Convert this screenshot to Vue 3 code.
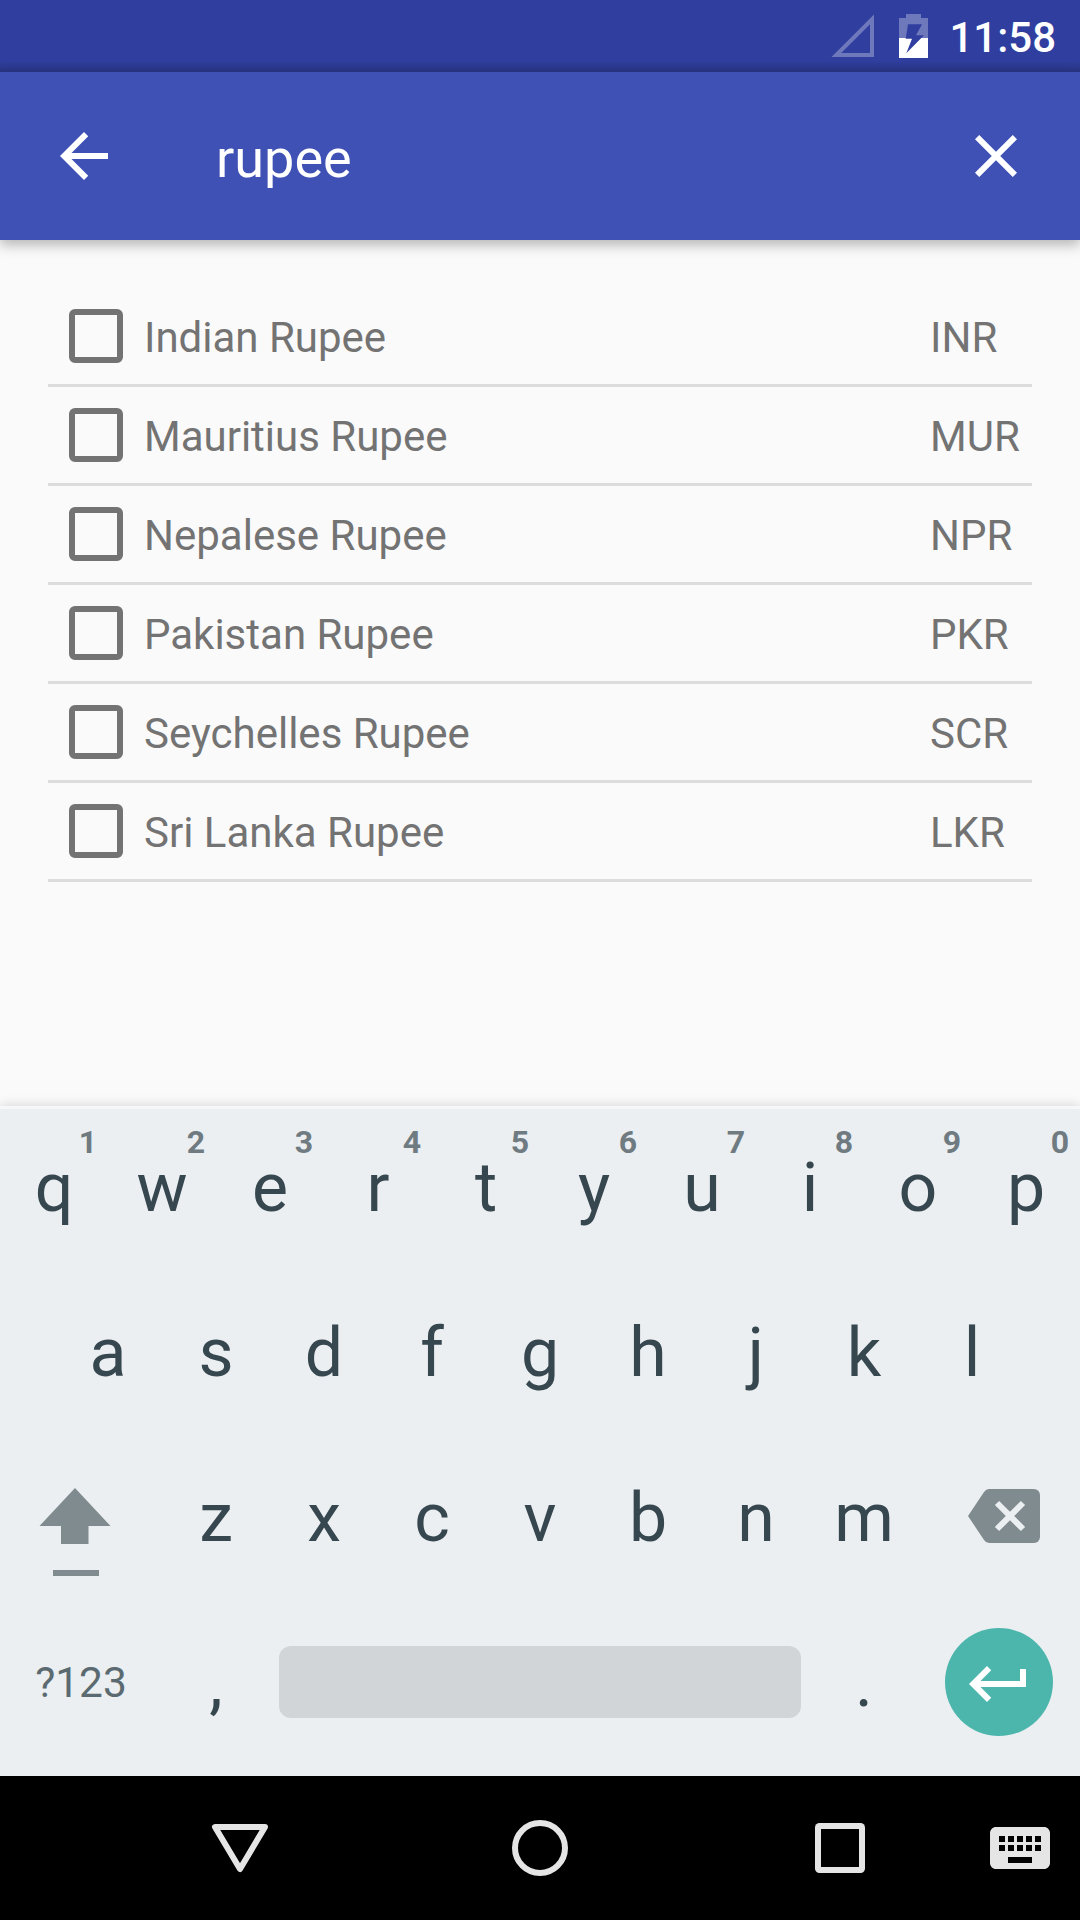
<script setup>
const currencies = [
  { name: 'Indian Rupee', code: 'INR' },
  { name: 'Mauritius Rupee', code: 'MUR' },
  { name: 'Nepalese Rupee', code: 'NPR' },
  { name: 'Pakistan Rupee', code: 'PKR' },
  { name: 'Seychelles Rupee', code: 'SCR' },
  { name: 'Sri Lanka Rupee', code: 'LKR' },
]
const topRow = [...'qwertyuiop'].map((letter, i) => ({ letter, hint: (i + 1) % 10 }))
const homeRow = [...'asdfghjkl']
const bottomRow = [...'zxcvbnm']
</script>

<template>
  <div class="screen">
    <header class="status">
      <svg class="signal" width="44" height="44" viewBox="0 0 44 44">
        <path fill="#fff" fill-opacity=".3" fill-rule="evenodd" d="M43 .5V43H.5zM39 10.2L10.2 39H39z" />
      </svg>
      <svg class="battery" width="29" height="44" viewBox="0 0 29 44">
        <defs>
          <linearGradient id="charge" gradientUnits="userSpaceOnUse" x1="0" y1="0" x2="0" y2="44">
            <stop offset="0" stop-color="#fff" stop-opacity=".3" />
            <stop offset=".5455" stop-color="#fff" stop-opacity=".3" />
            <stop offset=".5455" stop-color="#fff" />
            <stop offset="1" stop-color="#fff" />
          </linearGradient>
        </defs>
        <path fill="url(#charge)" fill-rule="evenodd" d="M0 4h7V0h15v4h7v40H0zM9 10.300L6.700 24.700H13L7.300 39.300 25 21.200H17L23 10.300z" />
      </svg>
      <span class="clock">11:58</span>
    </header>

    <div class="toolbar">
      <svg width="72" height="72" viewBox="0 0 24 24" fill="#fff">
        <path d="M20 11H7.830l5.590-5.590L12 4l-8 8 8 8 1.410-1.410L7.830 13H20v-2z" />
      </svg>
      <span class="query">rupee</span>
      <svg width="72" height="72" viewBox="0 0 24 24" fill="#fff">
        <path d="M19 6.410L17.590 5 12 10.590 6.410 5 5 6.410 10.590 12 5 17.590 6.410 19 12 13.410 17.590 19 19 17.590 13.410 12z" />
      </svg>
    </div>

    <main class="list">
      <div v-for="c in currencies" :key="c.code" class="row">
        <span class="box"></span>
        <span class="name">{{ c.name }}</span>
        <span class="code">{{ c.code }}</span>
      </div>
    </main>

    <section class="keyboard">
      <div class="keys">
        <span v-for="k in topRow" :key="k.letter" class="key">
          {{ k.letter }}<span class="hint">{{ k.hint }}</span>
        </span>
      </div>
      <div class="keys">
        <span v-for="k in homeRow" :key="k" class="key">{{ k }}</span>
      </div>
      <div class="keys">
        <span class="wide shift">
          <svg width="72" height="90" viewBox="0 0 72 90" fill="#808b8f">
            <path d="M36 0l35.500 38H49.500v18H22V38H.5z" />
            <path d="M14 82h46v6H14z" />
          </svg>
        </span>
        <span v-for="k in bottomRow" :key="k" class="key">{{ k }}</span>
        <span class="wide delete">
          <svg width="72" height="54" viewBox="0 0 72 54">
            <path fill="#808b8f" d="M21 0h45a6 6 0 0 1 6 6v42a6 6 0 0 1-6 6H21q-3 0-5-3L0 27 16 3q2-3 5-3z" />
            <path stroke="#ebeff2" stroke-width="6" d="M29 14l26 26M55 14L29 40" />
          </svg>
        </span>
      </div>
      <div class="keys">
        <span class="wide symbols">?123</span>
        <span class="key">,</span>
        <span class="space"></span>
        <span class="key">.</span>
        <span class="enter">
          <svg width="72" height="72" viewBox="0 0 24 24" fill="#fff">
            <path d="M19 7v4H5.830l3.580-3.590L8 6l-6 6 6 6 1.410-1.410L5.830 13H21V7z" />
          </svg>
        </span>
      </div>
    </section>

    <nav class="nav">
      <svg width="72" height="72" viewBox="0 0 72 72">
        <path d="M11 15h50L36 57z" fill="none" stroke="#e5e5e5" stroke-width="6" stroke-linejoin="round" />
      </svg>
      <svg width="72" height="72" viewBox="0 0 72 72">
        <circle cx="36" cy="36" r="25" fill="none" stroke="#e5e5e5" stroke-width="6" />
      </svg>
      <svg width="72" height="72" viewBox="0 0 72 72">
        <rect x="11" y="11" width="50" height="50" rx="4.500" fill="#e5e5e5" />
        <path d="M17 17h38v38H17z" fill="#000" />
      </svg>
      <svg class="ime" width="72" height="72" viewBox="0 0 24 24" fill="#e5e5e5">
        <path d="M20 5H4c-1.100 0-1.990.9-1.990 2L2 17c0 1.100.9 2 2 2h16c1.100 0 2-.9 2-2V7c0-1.100-.9-2-2-2zm-9 3h2v2h-2V8zm0 3h2v2h-2v-2zM8 8h2v2H8V8zm0 3h2v2H8v-2zm-1 2H5v-2h2v2zm0-3H5V8h2v2zm9 7H8v-2h8v2zm0-4h-2v-2h2v2zm0-3h-2V8h2v2zm3 3h-2v-2h2v2zm0-3h-2V8h2v2z" />
      </svg>
    </nav>
  </div>
</template>

<style>
body {
  margin: 0;
}
</style>

<style scoped>
.screen {
  width: 1080px;
  height: 1920px;
  display: flex;
  flex-direction: column;
  overflow: hidden;
  background: #fafafa;
  font-family: Roboto, sans-serif;
}
svg {
  display: block;
  flex: none;
}
.status {
  height: 72px;
  box-sizing: border-box;
  display: flex;
  align-items: flex-start;
  justify-content: flex-end;
  padding: 14px 24px 0 0;
  background: linear-gradient(#303f9f 60px, #2d3a92 66px, #283583 72px);
  color: #fff;
}
.battery {
  margin: 0 21px 0 24px;
}
.clock {
  font-size: 42px;
  line-height: 48px;
  font-weight: 500;
}
.toolbar {
  height: 168px;
  box-sizing: border-box;
  display: flex;
  align-items: center;
  padding: 0 48px;
  background: #3f51b5;
  box-shadow: 0 5px 12px rgba(0, 0, 0, 0.28);
}
.query {
  flex: 1;
  margin: 6px 0 0 96px;
  font-size: 54px;
  line-height: 64px;
  color: #fff;
}
.list {
  flex: 1;
  padding: 48px 48px 0;
}
.row {
  height: 96px;
  display: flex;
  align-items: center;
  border-bottom: 3px solid #dcdcdc;
  font-size: 42px;
  line-height: 49px;
  color: #737373;
}
.box {
  width: 42px;
  height: 42px;
  margin: 0 21px;
  border: 6px solid #737373;
  border-radius: 6px;
}
.name {
  flex: 1;
  padding-top: 3px;
}
.code {
  width: 102px;
  padding-top: 3px;
}
.keyboard {
  height: 667px;
  border-top: 3px solid #f5f7f8;
  background: #ebeff2;
  box-shadow: 0 -2px 10px rgba(0, 0, 0, 0.12);
  color: #37474f;
}
.keys {
  height: 165px;
  display: flex;
  justify-content: center;
}
.key {
  position: relative;
  width: 108px;
  font-size: 68px;
  line-height: 158px;
  text-align: center;
}
.hint {
  position: absolute;
  top: 15px;
  right: 11px;
  font-size: 32px;
  line-height: 37px;
  font-weight: 700;
  color: #6f7b81;
}
.wide {
  width: 162px;
  box-sizing: border-box;
}
.shift {
  padding: 49px 0 0 39px;
}
.delete {
  padding: 50px 0 0 50px;
}
.symbols {
  font-size: 42.5px;
  line-height: 157px;
  text-align: center;
  color: #5b6a70;
}
.space {
  width: 522px;
  height: 72px;
  margin: 42px 9px 0;
  border-radius: 12px;
  background: #d1d5d8;
}
.enter {
  width: 108px;
  height: 108px;
  box-sizing: border-box;
  margin: 24px 27px 0;
  padding: 20px 18px 0;
  border-radius: 50%;
  background: #4db6ac;
}
.nav {
  height: 144px;
  display: grid;
  grid-template-columns: 90px 300px 300px 300px 90px;
  align-items: center;
  justify-items: center;
  background: #000;
}
.nav svg:first-child {
  grid-column: 2;
}
.nav .ime {
  justify-self: end;
  margin-right: 24px;
}
</style>
